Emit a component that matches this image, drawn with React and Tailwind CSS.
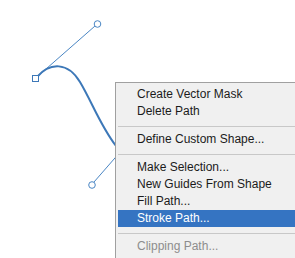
import React from "react";

const items = [
  { label: "Create Vector Mask" },
  { label: "Delete Path" },
  { sep: true },
  { label: "Define Custom Shape..." },
  { sep: true },
  { label: "Make Selection..." },
  { label: "New Guides From Shape" },
  { label: "Fill Path..." },
  { label: "Stroke Path...", active: true },
  { sep: true },
  { label: "Clipping Path...", disabled: true },
];

const PathDrawing = () => (
  <svg
    className="absolute left-0 top-0"
    width="295"
    height="258"
    viewBox="0 0 295 258"
    fill="none"
  >
    {/* handles */}
    <line x1="38" y1="76" x2="95" y2="26" stroke="#4a86c4" strokeWidth="1" />
    <circle cx="97.5" cy="24" r="3.3" fill="white" stroke="#4a86c4" strokeWidth="1" />
    <line x1="94" y1="182" x2="135" y2="135" stroke="#4a86c4" strokeWidth="1" />
    <circle cx="92" cy="185" r="3.3" fill="white" stroke="#4a86c4" strokeWidth="1" />
    {/* curve */}
    <path
      d="M37 77 C 50 62, 68 62, 80 82 S 100 125, 116 146 S 140 175, 150 180"
      stroke="#3d78b8"
      strokeWidth="2"
      strokeLinecap="round"
    />
    <rect x="32.5" y="75.5" width="6" height="6" fill="white" stroke="#3d78b8" strokeWidth="1" />
  </svg>
);

const App = () => {
  return (
    <div className="relative w-[295px] h-[258px] overflow-hidden bg-white">
      <PathDrawing />

      {/* context menu */}
      <div
        className="absolute left-[115px] top-[82px] w-[200px] h-[200px] bg-[#f0f0f0] border-l border-t border-[#a0a0a0] pt-[3px] pl-[2px] text-[12px] leading-[17px] text-[#1b1b1b]"
        style={{ fontFamily: '"Liberation Sans", Arial, sans-serif' }}
      >
        {items.map((item, i) =>
          item.sep ? (
            <div key={i} className="h-[11px] pt-[6px]">
              <div className="h-px bg-[#c8c8c8]" />
            </div>
          ) : (
            <div
              key={i}
              className={
                "h-[17px] pl-[19px] whitespace-nowrap " +
                (item.active
                  ? "bg-[#3574c2] text-white"
                  : item.disabled
                  ? "text-[#8d8d8d]"
                  : "")
              }
            >
              {item.label}
            </div>
          )
        )}
      </div>
    </div>
  );
};

export default App;
